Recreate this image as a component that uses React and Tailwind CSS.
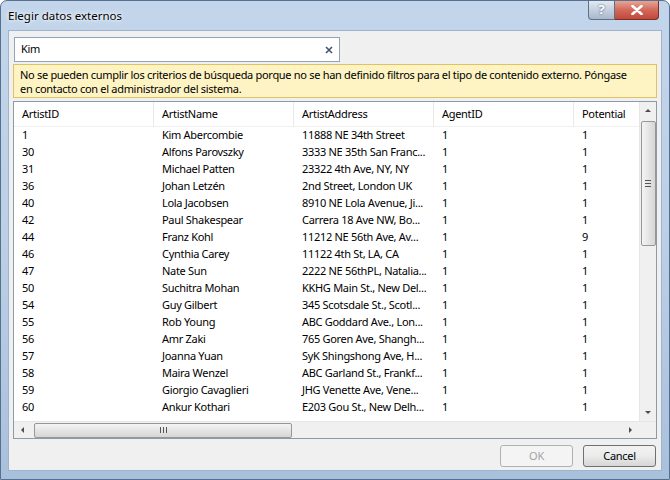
import React from "react";

const rows = [
  ["1", "Kim Abercombie", "11888 NE 34th Street", "1", "1"],
  ["30", "Alfons Parovszky", "3333 NE 35th San Franc...", "1", "1"],
  ["31", "Michael Patten", "23322 4th Ave, NY, NY", "1", "1"],
  ["36", "Johan Letzén", "2nd Street, London UK", "1", "1"],
  ["40", "Lola Jacobsen", "8910 NE Lola Avenue, Ji...", "1", "1"],
  ["42", "Paul Shakespear", "Carrera 18 Ave NW, Bo...", "1", "1"],
  ["44", "Franz Kohl", "11212 NE 56th Ave, Av...", "1", "9"],
  ["46", "Cynthia Carey", "11122 4th St, LA, CA", "1", "1"],
  ["47", "Nate Sun", "2222 NE 56thPL, Natalia...", "1", "1"],
  ["50", "Suchitra Mohan", "KKHG Main St., New Del...", "1", "1"],
  ["54", "Guy Gilbert", "345 Scotsdale St., Scotl...", "1", "1"],
  ["55", "Rob Young", "ABC Goddard Ave., Lon...", "1", "1"],
  ["56", "Amr Zaki", "765 Goren Ave, Shangh...", "1", "1"],
  ["57", "Joanna Yuan", "SyK Shingshong Ave, H...", "1", "1"],
  ["58", "Maira Wenzel", "ABC Garland St., Frankf...", "1", "1"],
  ["59", "Giorgio Cavaglieri", "JHG Venette Ave, Vene...", "1", "1"],
  ["60", "Ankur Kothari", "E203 Gou St., New Delh...", "1", "1"],
];

const headers = ["ArtistID", "ArtistName", "ArtistAddress", "AgentID", "Potential"];

function Arrow({ dir }) {
  const paths = {
    up: "M1 4 L4 1 L7 4 Z",
    down: "M1 1 L4 4 L7 1 Z",
    left: "M4 1 L1 4 L4 7 Z",
    right: "M1 1 L4 4 L1 7 Z",
  };
  const size = dir === "up" || dir === "down" ? [8, 5] : [5, 8];
  return (
    <svg width={size[0]} height={size[1]} viewBox={`0 0 ${size[0]} ${size[1]}`}>
      <path d={paths[dir]} fill="#4d4d4d" />
    </svg>
  );
}

function App() {
  return (
    <div
      className="w-[670px] h-[480px] overflow-hidden rounded-t-[7px] border border-[#56708f] bg-gradient-to-b from-[#c3d5ea] via-[#bccfe6] to-[#a9c0dc] flex flex-col text-[11px] tracking-[-0.3px] text-black"
      style={{ fontFamily: '"Noto Sans", "Liberation Sans", sans-serif' }}
    >
      {/* title bar */}
      <div className="h-[29px] flex shrink-0 pl-[7px]">
        <div className="flex-1 pt-[6px] text-[11.5px] tracking-normal [text-shadow:0_0_6px_#ffffff,0_0_3px_#ffffff]">
          Elegir datos externos
        </div>
        <div className="flex self-start mr-[10px]">
          <div className="w-[27px] h-[19px] rounded-bl-[4px] border border-t-0 border-[#5f6f86] bg-gradient-to-b from-[#e2e9f2] to-[#a8b8cc] flex items-center justify-center text-white font-bold text-[13px] [text-shadow:0_0_2px_#39465a]">
            ?
          </div>
          <div className="w-[44px] h-[19px] rounded-br-[4px] border border-l-0 border-t-0 border-[#7a2f28] bg-gradient-to-b from-[#e6a596] via-[#d2685a] to-[#c2473b] flex items-center justify-center">
            <svg width="12" height="10" viewBox="0 0 12 10">
              <path d="M1.5 1 L10.5 9 M10.5 1 L1.5 9" stroke="#ffffff" strokeWidth="2.6" strokeLinecap="round" />
            </svg>
          </div>
        </div>
      </div>

      {/* client area */}
      <div className="mx-[7px] mb-[8px] flex-1 border border-[#9fb3cc] bg-[#f0f0f0] flex flex-col pt-[6px] px-[4px]">
        <div className="ml-[1px] w-[326px] h-[25px] border border-[#8ea4bd] bg-white flex items-center px-[6px]">
          <span className="flex-1">Kim</span>
          <svg width="8" height="8" viewBox="0 0 8 8">
            <path d="M1 1 L7 7 M7 1 L1 7" stroke="#3f5674" strokeWidth="1.6" />
          </svg>
        </div>

        <div className="mt-[2px] h-[34px] border border-[#e2c160] bg-[#fdf3c3] px-[6px] pt-[3px] leading-[14px] whitespace-nowrap">
          No se pueden cumplir los criterios de búsqueda porque no se han definido filtros para el tipo de contenido externo. Póngase
          <br />
          en contacto con el administrador del sistema.
        </div>

        {/* table */}
        <div className="mt-[3px] h-[338px] border border-[#8e9aa6] bg-white flex flex-col">
          <div className="flex-1 flex overflow-hidden">
            <div className="flex-1 overflow-hidden">
              <div className="flex h-[25px] border-b border-[#f0f0f0]">
                {headers.map((h) => (
                  <div key={h} className="w-[140px] shrink-0 pl-[8px] pt-[1px] flex items-center border-r border-[#e8e8e8]">
                    {h}
                  </div>
                ))}
              </div>
              {rows.map((r) => (
                <div key={r[0]} className="flex h-[17px] items-center">
                  {r.map((c, i) => (
                    <div key={i} className="w-[140px] shrink-0 pl-[8px] whitespace-nowrap overflow-hidden">
                      {c}
                    </div>
                  ))}
                </div>
              ))}
            </div>
            {/* vertical scrollbar */}
            <div className="w-[17px] bg-[#f0f0f0] border-l border-[#e6e6e6] flex flex-col items-center">
              <div className="h-[17px] flex items-center justify-center">
                <Arrow dir="up" />
              </div>
              <div className="mt-[2px] w-[15px] h-[125px] rounded-[2px] border border-[#979797] bg-gradient-to-r from-[#f4f4f4] to-[#d6d6d6] flex flex-col items-center justify-center gap-[2px]">
                <div className="w-[6px] h-px bg-[#555]" />
                <div className="w-[6px] h-px bg-[#555]" />
                <div className="w-[6px] h-px bg-[#555]" />
              </div>
              <div className="flex-1" />
              <div className="h-[17px] flex items-center justify-center">
                <Arrow dir="down" />
              </div>
            </div>
          </div>
          {/* horizontal scrollbar */}
          <div className="h-[17px] flex bg-[#f0f0f0] border-t border-[#e6e6e6]">
            <div className="flex-1 flex items-center">
              <div className="w-[17px] flex items-center justify-center">
                <Arrow dir="left" />
              </div>
              <div className="ml-[3px] w-[258px] h-[15px] rounded-[2px] border border-[#979797] bg-gradient-to-b from-[#f4f4f4] to-[#d6d6d6] flex items-center justify-center gap-[2px]">
                <div className="w-px h-[6px] bg-[#555]" />
                <div className="w-px h-[6px] bg-[#555]" />
                <div className="w-px h-[6px] bg-[#555]" />
              </div>
              <div className="flex-1" />
              <div className="w-[17px] flex items-center justify-center">
                <Arrow dir="right" />
              </div>
            </div>
            <div className="w-[17px] bg-[#f0f0f0]" />
          </div>
        </div>

        {/* buttons */}
        <div className="flex justify-end gap-[10px] mt-[6px] pr-[1px]">
          <div className="w-[73px] h-[22px] rounded-[3px] border border-[#adb2b5] bg-[#f4f4f4] text-[#a3a3a3] flex items-center justify-center">
            OK
          </div>
          <div className="w-[73px] h-[22px] rounded-[3px] border border-[#707070] bg-gradient-to-b from-[#f2f2f2] via-[#ebebeb] to-[#d6d6d6] flex items-center justify-center">
            Cancel
          </div>
        </div>
      </div>
    </div>
  );
}

export default App;
